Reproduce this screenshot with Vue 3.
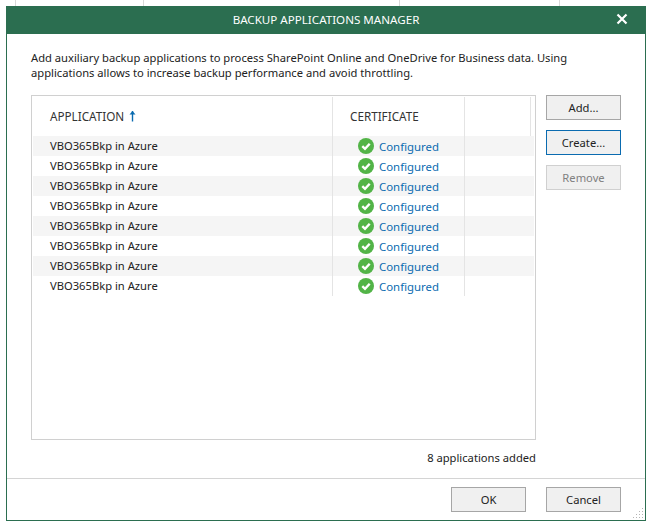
<script setup>
const rows = Array.from({ length: 8 }, (_, i) => i)
</script>

<template>
  <div class="page">
    <div class="window">
      <header class="titlebar">
        <span class="title">BACKUP APPLICATIONS MANAGER</span>
        <svg class="close" width="12" height="12" viewBox="0 0 12 12">
          <path d="M1.500 1.500 L10.500 10.500 M10.500 1.500 L1.500 10.500" stroke="#fff" stroke-width="2.200" fill="none" />
        </svg>
      </header>
      <main class="content">
        <p class="intro">Add auxiliary backup applications to process SharePoint Online and OneDrive for Business data. Using<br />applications allows to increase backup performance and avoid throttling.</p>
        <div class="split">
          <div class="left">
            <div class="list">
              <div class="cols">
                <div class="head">
                  <div class="hcell app">APPLICATION
                    <svg class="arrow" width="9" height="12" viewBox="0 0 9 12">
                      <path d="M4.500 1 V11.500" stroke="#0a6bb0" stroke-width="1.400" fill="none" />
                      <path d="M1.500 4.500 L4.500 1 L7.500 4.500 Z" fill="#0a6bb0" />
                    </svg>
                  </div>
                  <div class="hcell cert">CERTIFICATE</div>
                  <div class="hcell extra"></div>
                  <div class="hcell tail"></div>
                </div>
                <div v-for="r in rows" :key="r" class="row" :class="{ odd: r % 2 === 0 }">
                  <div class="cell app">VBO365Bkp in Azure</div>
                  <div class="cell cert">
                    <svg class="ok" width="16" height="16" viewBox="0 0 16 16">
                      <circle cx="8" cy="8" r="8" fill="#52b447" />
                      <path d="M4.300 8.200 L7 10.800 L11.700 5.800" stroke="#fff" stroke-width="2.400" fill="none" />
                    </svg>
                    <span class="link">Configured</span>
                  </div>
                  <div class="cell extra"></div>
                  <div class="cell tail"></div>
                </div>
              </div>
            </div>
            <div class="status">8 applications added</div>
          </div>
          <div class="side">
            <button class="btn">Add...</button>
            <button class="btn focused">Create...</button>
            <button class="btn disabled">Remove</button>
          </div>
        </div>
      </main>
      <footer class="footer">
        <button class="btn">OK</button>
        <button class="btn">Cancel</button>
        <svg class="grip" width="12" height="12" viewBox="0 0 12 12">
          <g fill="#b5b5b5">
            <rect x="9" y="0" width="1" height="1" /><rect x="9" y="3" width="1" height="1" />
            <rect x="6" y="3" width="1" height="1" /><rect x="9" y="6" width="1" height="1" />
            <rect x="6" y="6" width="1" height="1" /><rect x="3" y="6" width="1" height="1" />
            <rect x="9" y="9" width="1" height="1" /><rect x="6" y="9" width="1" height="1" />
            <rect x="3" y="9" width="1" height="1" /><rect x="0" y="9" width="1" height="1" />
          </g>
        </svg>
      </footer>
    </div>
  </div>
</template>

<style>
html, body { margin: 0; background: #fff; }
</style>

<style scoped>
.page {
  box-sizing: border-box;
  width: 653px;
  height: 528px;
  padding: 6px 7px 7px 6px;
  background-color: #fff;
  background-image:
    linear-gradient(#d9d9d9, #d9d9d9), linear-gradient(#d9d9d9, #d9d9d9),
    linear-gradient(#d9d9d9, #d9d9d9), linear-gradient(#d9d9d9, #d9d9d9);
  background-size: 1px 6px;
  background-repeat: no-repeat;
  background-position: 15px 0, 143px 0, 399px 0, 559px 0;
  font-family: "Noto Sans", sans-serif;
  font-size: 11.2px;
  color: #222;
}
.window {
  box-sizing: border-box;
  height: 515px;
  display: flex;
  flex-direction: column;
  background: #fff;
  border: 1px solid #2b6e50;
  border-top: 0;
}
.titlebar {
  height: 28px;
  margin: 0 -1px;
  padding-bottom: 2px;
  box-sizing: border-box;
  flex: none;
  display: flex;
  align-items: center;
  justify-content: center;
  position: relative;
  background: #2b6e50;
  color: #fff;
  font-size: 11.6px;
}
.close { position: absolute; right: 18px; top: 7px; }
.content { flex: 1; min-height: 0; display: flex; flex-direction: column; padding: 16px 24px 0 24px; }
.intro { margin: 0; line-height: 15px; height: 30px; }
.split { display: flex; flex: 1; margin-top: 15px; gap: 10px; }
.left { width: 505px; display: flex; flex-direction: column; }
.list {
  box-sizing: border-box;
  height: 345px;
  border: 1px solid #d0d0d0;
  padding: 1px;
}
.head { display: flex; height: 39px; }
.row { display: flex; height: 20px; }
.row.odd { background: #f5f5f5; }
.hcell, .cell { box-sizing: border-box; display: flex; align-items: center; }
.hcell { color: #333; font-size: 11.7px; padding-bottom: 2px; }
.cell.app { padding-bottom: 2px; }
.app { width: 300px; padding-left: 17px; }
.cert { width: 132px; }
.extra { width: 66px; }
.tail { width: 3px; }
.hcell.cert { padding-left: 17px; }
.hcell.app, .cell.app, .hcell.cert, .cell.cert, .hcell.extra, .cell.extra { border-right: 1px solid #e4e4e4; }
.cell.extra { border-right-color: transparent; }
.arrow { margin-left: 4px; }
.cell.cert { padding-left: 25px; }
.ok { margin-right: 5px; flex: none; }
.link { color: #0a6bb0; font-size: 11.4px; }
.status { text-align: right; margin-top: 10px; line-height: 16px; color: #222; }
.side { display: flex; flex-direction: column; gap: 10px; }
.btn {
  box-sizing: border-box;
  width: 75px;
  height: 25px;
  padding: 0;
  background: #f0f0f0;
  border: 1px solid #a6a6a6;
  font: inherit;
  color: #222;
  text-align: center;
}
.btn.focused { border-color: #0a6bb0; }
.btn.disabled { color: #808080; border-color: #d0d0d0; }
.footer {
  flex: none;
  height: 42px;
  box-sizing: border-box;
  border-top: 1px solid #d4d4d4;
  display: flex;
  justify-content: flex-end;
  align-items: flex-start;
  gap: 20px;
  padding: 8px 24px 0 0;
  position: relative;
}
.grip { position: absolute; right: 0; bottom: 0; }
</style>
